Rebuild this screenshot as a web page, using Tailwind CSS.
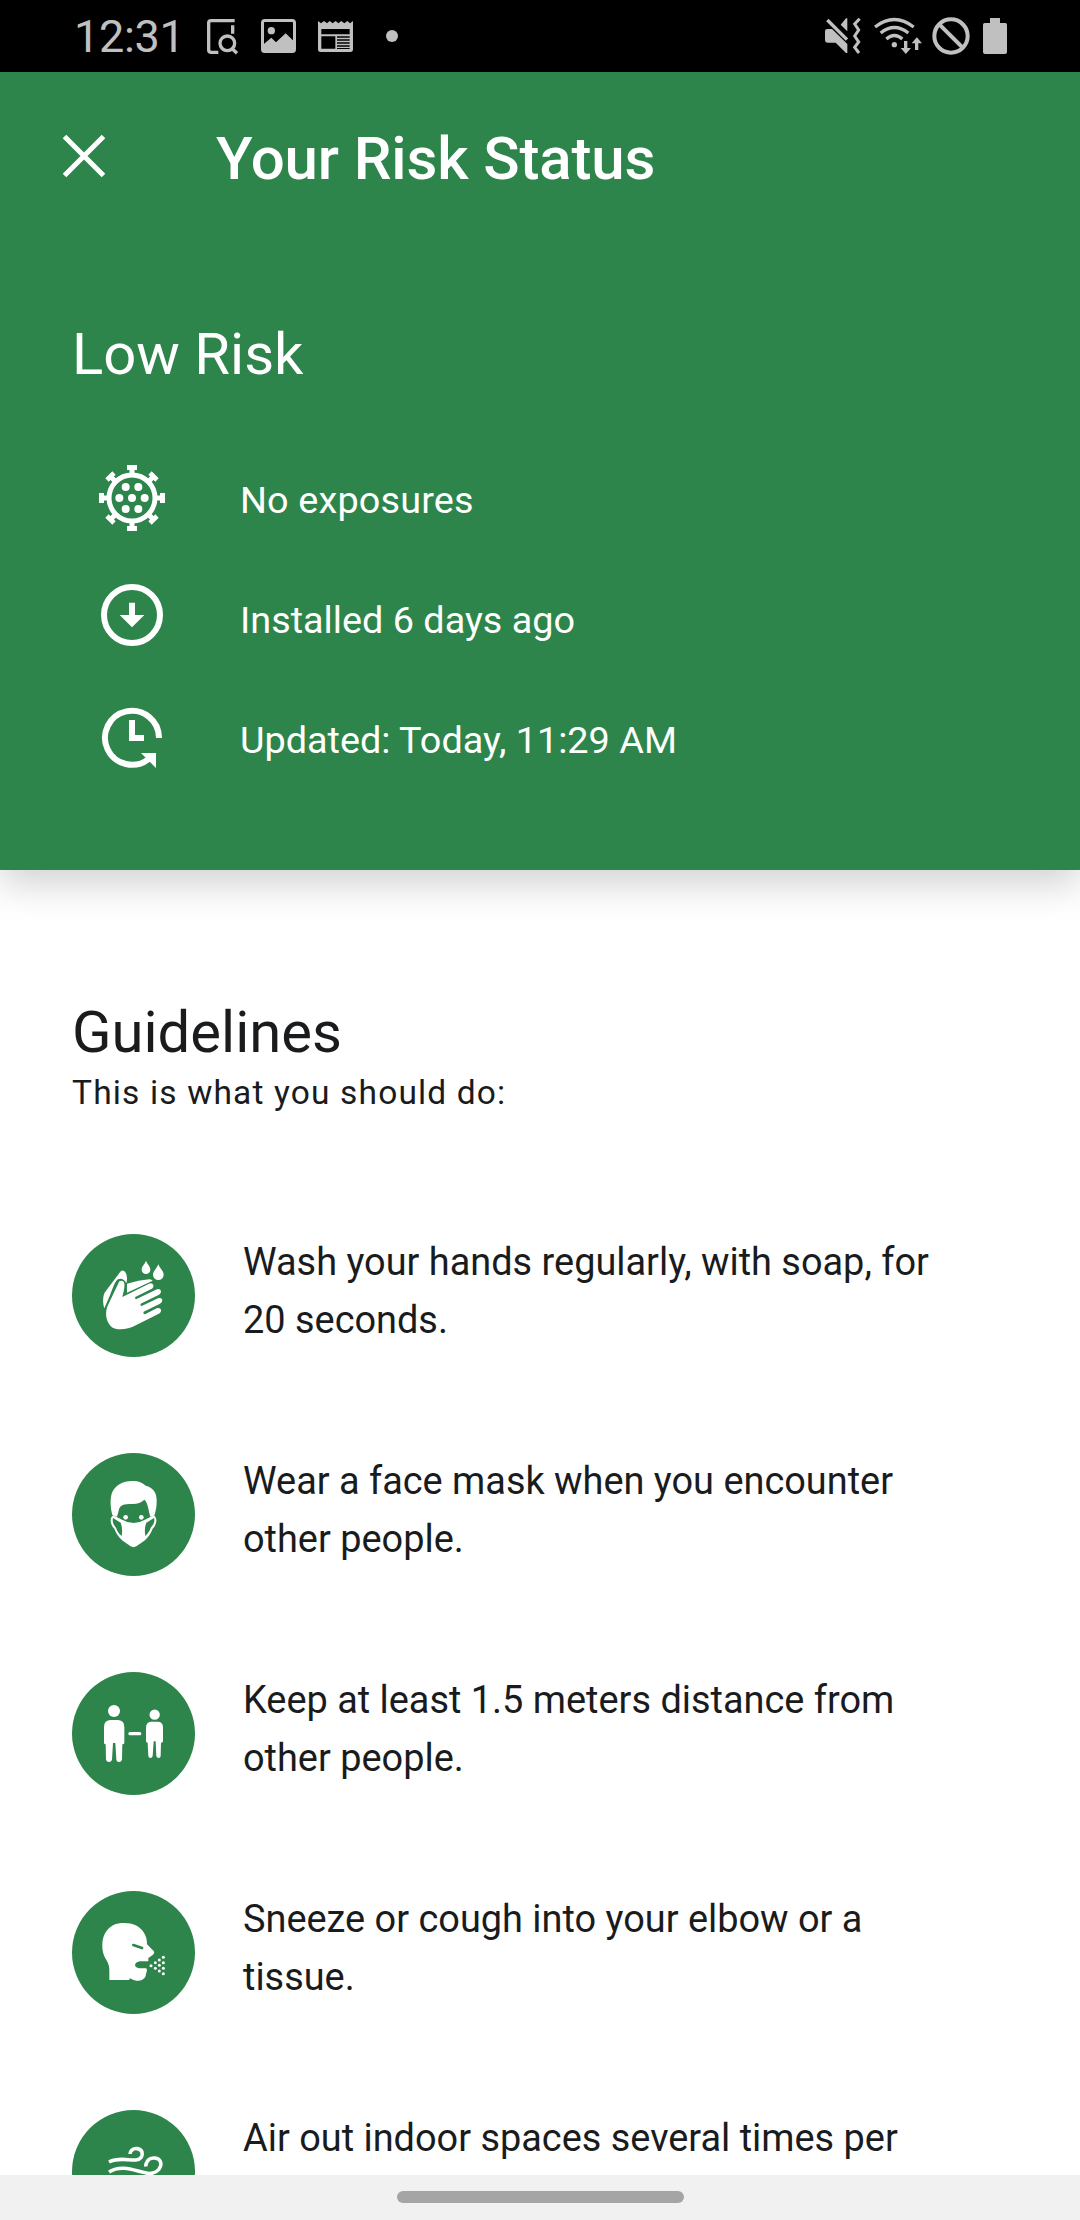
<!DOCTYPE html>
<html lang="en">
<head>
<meta charset="utf-8">
<title>Your Risk Status</title>
<script src="https://cdn.jsdelivr.net/npm/@tailwindcss/browser@4"></script>
</head>
<body class="bg-white font-[Roboto,sans-serif] text-[#191b1d]">
<div class="flex h-[2220px] w-[1080px] flex-col overflow-hidden">

  <!-- Status bar -->
  <div class="z-20 flex h-[72px] shrink-0 items-center justify-between bg-black pr-[73px] pl-[74px] text-[#c0c0c0]">
    <div class="flex items-center">
      <span class="w-[133px] pt-[2px] text-[45px] leading-[72px] tracking-[-0.300px]">12:31</span>
      <svg class="h-[72px] w-9" viewBox="441 0 108 216" fill="none" stroke="currentColor" stroke-width="10">
        <path d="M524 62H453Q446 62 446 69V149Q446 157 454 157H475M518 76V101"/>
        <circle cx="502" cy="130" r="22"/><path d="M514 144L531 160"/>
      </svg>
      <svg class="ml-[18px] h-[72px] w-9" viewBox="603 0 108 216">
        <rect x="607.500" y="61.500" width="96" height="93" rx="7" fill="none" stroke="currentColor" stroke-width="9"/>
        <circle cx="634" cy="92" r="11" fill="currentColor"/>
        <path d="M608 135L634 113L648 127L677 100L705 127V152L698 157H612Z" fill="currentColor"/>
      </svg>
      <svg class="ml-[21px] h-[72px] w-9" viewBox="774 0 108 216" fill="currentColor">
        <path fill-rule="evenodd" d="M774 63L783 70L792 63L801 70L809 63L818 70L827 63L835 70L844 63L853 70L862 63L870 70L879 63V148Q879 156 871 156H782Q774 156 774 148ZM784 87V103H869V87ZM784 109V146H826V109ZM831 109V113H869V109ZM831 118V122H869V118ZM831 127V131H869V127ZM831 136V140H869V136ZM831 144V147H869V144Z"/>
      </svg>
      <span class="ml-[32px] size-3 rounded-full bg-[#c0c0c0]"></span>
    </div>
    <div class="flex items-center">
      <svg class="h-[72px] w-9" viewBox="75 0 108 216" fill="currentColor">
        <path d="M82 87H96L142 132V159H138L107 128H82Q75 128 75 121V94Q75 87 82 87Z"/>
        <path d="M142 55V94L122 74L138 55Z"/>
        <path d="M82 60L141 119" fill="none" stroke="currentColor" stroke-width="10"/>
        <path d="M179 56L164 72L176 90L164 108L176 126L164 142L177 159" fill="none" stroke="currentColor" stroke-width="9"/>
      </svg>
      <svg class="ml-[13px] h-[72px] w-12" viewBox="222 0 144 216" fill="none" stroke="currentColor" stroke-width="10">
        <path d="M225 81Q283 36 341 81M242 99Q283 66 325 99M259 117Q283 96 307 117"/>
        <circle cx="283" cy="134" r="8" fill="currentColor" stroke="none"/>
        <path d="M317 123V150M350 150V124" stroke-width="10"/>
        <path d="M302 144H333L317.500 162ZM335 130H366L350.500 112Z" fill="currentColor" stroke="none"/>
      </svg>
      <svg class="ml-[10px] h-[72px] w-[38px]" viewBox="396 0 114 216" fill="none" stroke="currentColor" stroke-width="12">
        <circle cx="453" cy="108" r="50"/><path d="M418 73L488 143"/>
      </svg>
      <svg class="ml-[13px] h-[72px] w-6" viewBox="549 0 72 216" fill="currentColor">
        <path d="M570 54H600V69H616Q621 69 621 74V156Q621 162 615 162H555Q549 162 549 156V74Q549 69 554 69H570Z"/>
      </svg>
    </div>
  </div>

  <!-- Risk status header -->
  <header class="z-10 h-[798px] shrink-0 bg-[#2e854b] text-white shadow-[0_14px_36px_rgba(0,0,0,0.18)]">
    <div class="flex h-[173px] items-center">
      <svg class="mb-[5px] ml-[62px] h-11 w-11" viewBox="0 0 44 44" fill="none" stroke="currentColor" stroke-width="5"><path d="M2.500 2.500L41.500 41.500M41.500 2.500L2.500 41.500"/></svg>
      <h1 class="ml-[110px] text-[60px] leading-[72px] font-medium tracking-[-0.120px]">Your Risk Status</h1>
    </div>
    <h2 class="mt-[73px] pl-[72px] text-[58px] leading-[72px]">Low Risk</h2>
    <ul class="mt-[50px] text-[37.800px] leading-[120px]">
      <li class="flex h-[120px] pl-[96px] tracking-[0.150px]">
        <svg class="mr-[72px] h-[120px] w-[72px]" viewBox="78 0 216 360" fill="currentColor">
          <g fill="none" stroke="currentColor" stroke-width="15">
            <circle cx="186" cy="174" r="69"/>
            <path d="M186 105V82M186 243V266M117 174H94M255 174H278"/>
            <path d="M137 125L121 109M235 125L251 109M137 223L121 239M235 223L251 239"/>
          </g>
          <path d="M171 75H201V90H171ZM171 258H201V273H171ZM87 159H102V189H87ZM270 159H285V189H270Z"/>
          <path d="M106 115L127 94L137 104L116 125ZM266 115L245 94L235 104L256 125ZM106 233L127 254L137 244L116 223ZM266 233L245 254L235 244L256 223Z"/>
          <circle cx="167" cy="141" r="12"/><circle cx="205" cy="141" r="12"/><circle cx="148" cy="174" r="12"/><circle cx="186" cy="174" r="12"/><circle cx="224" cy="174" r="12"/><circle cx="167" cy="207" r="12"/><circle cx="205" cy="207" r="12"/>
        </svg>
        No exposures
      </li>
      <li class="flex h-[120px] pl-[96px]">
        <svg class="mr-[72px] h-[120px] w-[72px]" viewBox="78 360 216 360" fill="currentColor">
          <circle cx="186" cy="525" r="84" fill="none" stroke="currentColor" stroke-width="18"/>
          <path d="M177 488H195V525H223L186 562L149 525H177Z"/>
        </svg>
        Installed 6 days ago
      </li>
      <li class="flex h-[120px] pl-[96px]">
        <svg class="mr-[72px] h-[120px] w-[72px]" viewBox="78 720 216 360" fill="currentColor">
          <path d="M267 894A81 81 0 1 0 236 957" fill="none" stroke="currentColor" stroke-width="18"/>
          <path d="M177 840H195V885H222V903H177ZM213 939H258V984Z"/>
        </svg>
        Updated: Today, 11:29 AM
      </li>
    </ul>
  </header>

  <!-- Guidelines -->
  <main class="min-h-0 grow overflow-hidden bg-white pt-[126px] pl-[72px]">
    <h2 class="text-[58px] leading-[72px]">Guidelines</h2>
    <p class="text-[33.500px] leading-[49px] tracking-[1.150px]">This is what you should do:</p>
    <ul class="mt-[117px] text-[37.900px] leading-[58px]">
      <li class="flex h-[219px] gap-[48px]">
        <svg class="size-[123px] rounded-full bg-[#2e854b]" viewBox="36 42 369 369" fill="white">
          <path d="M133 265C128 250 127 226 137 214L181 155Q190 146 197 158Q204 170 199 190Q190 172 174 178C164 184 158 207 150 226Z"/>
          <path d="M201 191Q236 180 268 178Q276 179 278 182L201 218Z"/>
          <path d="M178 184Q186 180 192 187C196 198 191 215 187 231L267 191Q276 187 280 195Q282 203 274 207L226 231Q223 235 228 238L291 208Q300 205 303 213Q304 220 297 224L242 251Q239 256 245 258L294 235Q304 231 307 239Q308 246 300 251L251 275Q248 281 255 283L290 265Q300 261 303 269Q304 278 295 282L223 318C205 328 165 334 151 317C137 301 135 276 143 257Z"/>
          <path d="M258 122C263 134 271 139 271 149A13 13 0 0 1 245 149C245 139 253 134 258 122ZM295 133C300 146 311 153 311 164A16 16 0 0 1 279 164C279 153 290 146 295 133Z"/>
        </svg>
        <p class="-mt-px">Wash your hands regularly, with soap, for<br>20 seconds.</p>
      </li>
      <li class="flex h-[219px] gap-[48px]">
        <svg class="size-[123px] rounded-full bg-[#2e854b]" viewBox="36 39 369 369" fill="white">
          <path d="M157 225C151 203 150 178 155 161C164 136 188 123 217 123Q242 122 257 137C279 142 291 158 290 184C290 205 286 217 283 227L271 230C265 210 264 188 253 179C245 187 233 192 217 192C192 192 179 194 176 212L171 230Z"/>
          <circle cx="197" cy="232" r="7"/><circle cx="244" cy="232" r="7"/>
          <path fill-rule="evenodd" d="M160 226L183 238Q221 260 258 238L281 226Q291 232 289 244Q287 258 278 266Q270 288 253 302L229 319Q221 324 212 319L188 302Q171 288 163 266Q154 258 152 244Q151 231 160 226ZM159 234C156 246 162 257 168 263C172 275 178 282 185 288Q189 266 182 248ZM282 234L259 248Q252 266 256 288C263 281 269 273 272 263C278 257 286 246 282 234Z"/>
        </svg>
        <p class="-mt-px">Wear a face mask when you encounter<br>other people.</p>
      </li>
      <li class="flex h-[219px] gap-[48px]">
        <svg class="size-[123px] rounded-full bg-[#2e854b]" viewBox="36 36 369 369" fill="white">
          <circle cx="162" cy="153" r="18"/><circle cx="284" cy="164" r="15.500"/>
          <path d="M150 180H175Q193 182 193 201V248Q193 253 187 253L186 299Q184 306 177 306Q170 306 169 299L166 249H159L156 299Q154 306 147 306Q140 306 138 299L137 253Q132 253 132 248V201Q132 182 150 180Z"/>
          <path d="M273 185H295Q309 187 309 202V244Q309 248 303 248L302 288Q301 294 296 294Q291 294 289 288L287 244H281L278 288Q277 294 271 294Q266 294 265 288L263 248Q258 248 258 244V202Q258 187 273 185Z"/>
          <rect x="205" y="216" width="39" height="10" rx="5"/>
        </svg>
        <p class="-mt-px">Keep at least 1.5 meters distance from<br>other people.</p>
      </li>
      <li class="flex h-[219px] gap-[48px]">
        <svg class="size-[123px] rounded-full bg-[#2e854b]" viewBox="36 33 369 369" fill="white">
          <path d="M148 300V270C148 251 140 244 133 229C124 207 125 177 136 158C150 136 168 129 193 129C218 129 239 138 251 157C259 169 261 181 261 193L281 213Q285 220 278 225L265 234V244H239Q225 247 225 256Q227 264 239 265H259Q262 268 260 276Q257 282 257 288C252 300 240 303 229 302Q218 301 210 295L207 300Z"/>
          <path d="M220 195L246 204" stroke="#2e854b" stroke-width="8" stroke-linecap="round"/>
          <circle cx="273" cy="257" r="4.500"/><circle cx="286" cy="248" r="4.500"/><circle cx="286" cy="265" r="4.500"/><circle cx="298" cy="240" r="4.500"/><circle cx="298" cy="256" r="4.500"/><circle cx="298" cy="273" r="4.500"/><circle cx="310" cy="232" r="4.500"/><circle cx="310" cy="248" r="4.500"/><circle cx="310" cy="265" r="4.500"/><circle cx="310" cy="281" r="4.500"/>
        </svg>
        <p class="-mt-px">Sneeze or cough into your elbow or a<br>tissue.</p>
      </li>
      <li class="flex h-[219px] gap-[48px]">
        <svg class="size-[123px] rounded-full bg-[#2e854b]" viewBox="0 0 123 123" fill="none" stroke="white" stroke-width="3.600">
          <path d="M37 52C47 47 56 50.500 64 50C69 49.500 71 46 70 42C68.500 38 62 37.500 59.500 40.500Q58 42 58 44"/>
          <path d="M37 62C52 53 66 63 78 63.500C86 63 90 57 88.500 52C86 46 77 47.500 75 52Q73.500 54 74 56.500"/>
        </svg>
        <p class="-mt-px">Air out indoor spaces several times per</p>
      </li>
    </ul>
  </main>

  <!-- Gesture navigation bar -->
  <div class="flex h-[45px] shrink-0 justify-center bg-[#f1f1f1] pt-4">
    <div class="h-3 w-[287px] rounded-full bg-[#a5a5a5]"></div>
  </div>
</div>
</body>
</html>
